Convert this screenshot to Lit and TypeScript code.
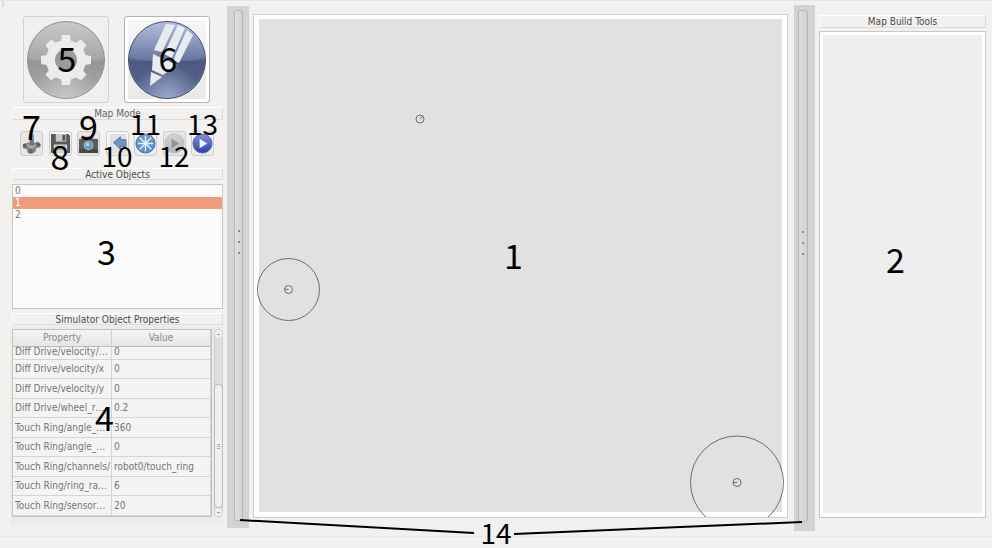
import { LitElement, html, svg, css } from "lit";
import { customElement, state } from "lit/decorators.js";
import { classMap } from "lit/directives/class-map.js";

type Row = [string, string];

const ROWS: Row[] = [
  ["Diff Drive/velocity/…", "0"],
  ["Diff Drive/velocity/x", "0"],
  ["Diff Drive/velocity/y", "0"],
  ["Diff Drive/wheel_r…", "0.2"],
  ["Touch Ring/angle_…", "360"],
  ["Touch Ring/angle_…", "0"],
  ["Touch Ring/channels/", "robot0/touch_ring"],
  ["Touch Ring/ring_ra…", "6"],
  ["Touch Ring/sensor…", "20"],
];

const gearIcon = html`<svg class="mode-icon" viewBox="0 0 80 80" aria-hidden="true">
  <defs>
    <linearGradient id="g" x1="0" y1="0" x2="0" y2="1">
      <stop offset="0" stop-color="#c9c9c9" /><stop offset="0.5" stop-color="#a6a6a6" />
      <stop offset="0.52" stop-color="#9c9c9c" /><stop offset="1" stop-color="#b4b4b4" />
    </linearGradient>
    <radialGradient id="gl" cx="0.5" cy="1" r="0.45">
      <stop offset="0" stop-color="#c8c8c8" /><stop offset="1" stop-color="#c8c8c8" stop-opacity="0" />
    </radialGradient>
  </defs>
  <circle cx="40" cy="40" r="38.5" fill="url(#g)" stroke="#8f8f8f" />
  <path d="M2 38Q40 46 78 38A38 38 0 0 1 2 38Z" fill="#8c8c8c" opacity="0.3" />
  <circle cx="40" cy="40" r="38" fill="url(#gl)" />
  <g fill="#ececec">
    ${[0, 45, 90, 135].map(
      (a) => svg`<path d="M36 15h8l1 6v38l-1 6h-8l-1-6V21z" transform=${`rotate(${a} 40 40)`} />`
    )}
    <circle cx="40" cy="40" r="20" />
  </g>
  <circle cx="40" cy="40" r="11" fill="#9a9a9a" />
</svg>`;

const pencilIcon = html`<svg class="mode-icon" viewBox="0 0 80 80" aria-hidden="true">
  <defs>
    <linearGradient id="p" x1="0" y1="0" x2="0" y2="1">
      <stop offset="0" stop-color="#b4c0de" /><stop offset="0.5" stop-color="#6877a0" />
      <stop offset="0.52" stop-color="#55618a" /><stop offset="1" stop-color="#6878a2" />
    </linearGradient>
    <radialGradient id="pl" cx="0.5" cy="1" r="0.45">
      <stop offset="0" stop-color="#9aa8cc" /><stop offset="1" stop-color="#9aa8cc" stop-opacity="0" />
    </radialGradient>
  </defs>
  <circle cx="40" cy="40" r="38.5" fill="url(#p)" stroke="#47506c" />
  <path d="M2 38Q40 46 78 38A38 38 0 0 1 2 38Z" fill="#444e70" opacity="0.4" />
  <circle cx="40" cy="40" r="38" fill="url(#pl)" />
  <g fill="#e9ecef">
    <path d="M39 4L48 5L35 32L27 30Z" />
    <path d="M51 5L58 8L45 38L37 34Z" />
    <path d="M60 10L66 15L52 43L46 40Z" />
    <path d="M26 34L50 45L36 55L25 50Z" />
    <path d="M24 52L35 57L23 66Z" />
  </g>
</svg>`;

const orb = (id: string, top: string, bottom: string, rim: string) => svg`
  <defs><linearGradient id=${id} x1="0" y1="0" x2="0" y2="1">
    <stop offset="0" stop-color=${top} /><stop offset="1" stop-color=${bottom} />
  </linearGradient></defs>
  <circle cx="11" cy="11" r="10" fill=${`url(#${id})`} stroke=${rim} />`;

const TOOLS = [
  {
    label: "Joystick",
    badge: "7",
    low: false,
    muted: true,
    art: svg`<path d="M2 12l6-2 5 1 4-2 4 3-1 3-4 1-1 4-4 2-4-1-1-4-4-1z" fill="#7f8385"/>
      <path d="M4 11l7 2 7-2-5 5h-4z" fill="#a9adaf"/>
      <circle cx="4" cy="13" r="2" fill="#5d6163"/><circle cx="18" cy="12" r="2" fill="#5d6163"/>
      <circle cx="10" cy="19" r="2" fill="#63676a"/>
      <path d="M9 4h4l1 9h-5z" fill="#6d7275"/><circle cx="11" cy="4" r="3" fill="#87a3b0"/>`,
  },
  {
    label: "Save",
    badge: "8",
    low: true,
    muted: false,
    art: svg`<path d="M1 1h18l2 2v18H1z" fill="#56585a"/>
      <path d="M6 1h11v8H6z" fill="#c6c8c9"/><path d="M13 2h3v6h-3z" fill="#4e5052"/>
      <path d="M4 12h14v9H4z" fill="#d0d1d2"/><path d="M6 14h10M6 17h10" stroke="#8b8d8e"/>`,
  },
  {
    label: "Snapshot",
    badge: "9",
    low: false,
    muted: true,
    art: svg`<path d="M7 4h8l1 2H6z" fill="#5c5e60"/><rect x="1" y="6" width="20" height="15" rx="1" fill="#5c5d5f"/>
      <path d="M1 17h20v4H1z" fill="#454648"/><circle cx="11" cy="13" r="5" fill="#b9c2c7"/>
      <circle cx="11" cy="13" r="4" fill="#5f9cb9"/><circle cx="10" cy="12" r="2" fill="#a5d4e6"/>`,
  },
  {
    label: "Back",
    badge: "10",
    low: true,
    muted: false,
    art: svg`<path d="M3 1h17v20H3z" fill="#e0e1e2"/>
      <path d="M7 10l7-6v3h6v7h-6v3z" fill="#7293be" stroke="#5674a0"/>`,
  },
  {
    label: "Center",
    badge: "11",
    low: false,
    muted: false,
    art: svg`${orb("o1", "#7a95c4", "#4a93d0", "#4a6fa8")}
      <path d="M11 3v16M3 11h16M5 5l12 12M17 5L5 17" stroke="#e4f1fb" stroke-width="1.5"/>`,
  },
  {
    label: "Step",
    badge: "12",
    low: true,
    muted: true,
    art: svg`${orb("o2", "#cfd3d3", "#b4baba", "#b8bcbc")}<path d="M8 6l8 5-8 5z" fill="#8f9595"/>`,
  },
  {
    label: "Play",
    badge: "13",
    low: false,
    muted: false,
    art: svg`${orb("o3", "#8492da", "#2a3fae", "#5560a8")}<path d="M8 6l8 5-8 5z" fill="#f4f6fd"/>`,
  },
];

/** A robot is a small body with a heading tick. */
const robot = (x: number, y: number, dx: number, dy: number) => svg`
  <circle cx=${x} cy=${y} r="4" /><path d=${`M${x} ${y}l${dx} ${dy}`} />`;

@customElement("app-root")
export class AppRoot extends LitElement {
  @state() private selected = 1;

  static styles = css`
    :host {
      display: block;
      position: relative;
      box-sizing: border-box;
      min-height: 100vh;
      overflow: hidden;
      background: #f2f1ef;
      border-top: 1px solid #e6e5e3;
      color: #5a5a5a;
      font: 10px/12px "DejaVu Sans Condensed", "DejaVu Sans", sans-serif;
    }
    * { box-sizing: border-box; }
    button { font: inherit; color: inherit; padding: 0; margin: 0; }
    .shell {
      display: grid;
      grid-template-columns: 227px 22px minmax(0, 1fr) 21px 177px;
      height: calc(100vh - 12px);
      min-height: 536px;
      border-bottom: 1px solid #e8e7e5;
    }
    .left {
      display: flex;
      flex-direction: column;
      padding: 15px 4px 11px 10px;
      position: relative;
    }
    .grip {
      position: absolute;
      left: 2px;
      top: 1px;
      width: 2px;
      height: 6px;
      background: repeating-linear-gradient(#cbcac8 0 1px, transparent 1px 2px);
    }
    .modes { display: flex; gap: 15px; padding-left: 13px; }
    .mode {
      position: relative;
      width: 86px;
      height: 87px;
      border: 1px solid #d2d1cf;
      border-radius: 3px;
      background: #f0f0ef;
      display: grid;
      place-items: center;
    }
    .mode.on { border-color: #b5b4b2; background: linear-gradient(#f6f6f6, #e9e9e9); box-shadow: inset 0 0 0 3px #fff; }
    .mode-icon { width: 80px; height: 80px; display: block; }
    .title {
      height: 12px;
      margin: 0 0 0 2px;
      width: 211px;
      border: 1px solid #dcdbd9;
      border-top-color: #fff;
      border-left-color: #fbfbfb;
      font: inherit;
      line-height: 11px;
      text-align: center;
      color: #4c4c4c;
      flex: none;
    }
    .title.map { margin-top: 4px; height: 13px; line-height: 12px; color: #666; }
    .tools { display: flex; justify-content: space-between; width: 204px; padding: 11px 0 12px 10px; }
    .tool {
      position: relative;
      width: 23px;
      height: 25px;
      border: 1px solid #cfcecc;
      border-radius: 3px;
      background: linear-gradient(#fafafa, #ebebea);
      display: grid;
      place-items: center;
    }
    .tool.muted { background: #e8e7e6; }
    .tool-icon { width: 21px; height: 21px; display: block; }
    .list {
      position: relative;
      margin: 4px 0 4px 2px;
      width: 211px;
      height: 125px;
      border: 1px solid #c6c5c3;
      background: #fbfbfb;
      flex: none;
    }
    .item {
      display: block;
      width: 100%;
      height: 12px;
      line-height: 12px;
      padding: 0 2px;
      border: 0;
      background: none;
      text-align: left;
      color: #777;
    }
    .item.on { background: #ef9c7c; color: #fff; }
    .props {
      position: relative;
      display: flex;
      gap: 2px;
      padding: 3px 0 8px 2px;
      margin-top: 1px;
      width: 213px;
      background: #ebebe9;
    }
    .view { width: 200px; height: 188px; border: 1px solid #c4c3c1; background: #f4f4f4; overflow: hidden; }
    table { width: 100%; border-collapse: separate; border-spacing: 0; table-layout: fixed; }
    th {
      height: 17px;
      padding: 0;
      border-bottom: 1px solid #bbb;
      border-right: 1px solid #d0d0d0;
      background: linear-gradient(#f4f4f4, #e6e6e5);
      font-weight: 400;
      color: #8a8a8a;
    }
    td {
      height: 20px;
      padding: 0 0 0 2px;
      border-bottom: 1px solid #d4d4d4;
      border-right: 1px solid #d4d4d4;
      color: #747474;
      white-space: nowrap;
    }
    tr:nth-child(even) td { height: 19px; }
    tr.cut td { height: 13px; line-height: 9px; vertical-align: top; }
    .scroll {
      width: 9px;
      height: 188px;
      border: 1px solid #cfcecc;
      border-radius: 4px;
      background: #dededd;
      display: flex;
      flex-direction: column;
    }
    .arrow { height: 8px; background: #f0f0ef; border-radius: 4px; display: grid; place-items: center; }
    .arrow::after { content: ""; width: 3px; height: 1px; background: #999; }
    .thumb {
      flex: 1;
      margin: 46px -1px 0;
      border: 1px solid #bbb;
      border-radius: 4px;
      background: #f0f0ef;
      display: grid;
      place-items: center;
    }
    .thumb::after {
      content: "";
      width: 3px;
      height: 5px;
      background: repeating-linear-gradient(#aaa 0 1px, transparent 1px 2px);
    }
    .splitter { background: #d3d3d3; margin: 5px 0 8px; padding: 4px 6px 7px 7px; display: flex; }
    .splitter.outer { margin: 4px 0 5px; padding: 5px 7px 9px 4px; }
    .rail {
      flex: 1;
      display: flex;
      flex-direction: column;
      align-items: center;
      justify-content: center;
      gap: 9px;
      padding-bottom: 47px;
      border: 1px solid #b4b4b4;
      border-radius: 3px;
      background: linear-gradient(90deg, #e0e0df, #d2d2d1);
    }
    .dot { width: 2px; height: 2px; background: #8c8783; }
    .stage { padding: 13px 6px 18px 4px; min-height: 0; }
    .frame {
      position: relative;
      height: 100%;
      border: 1px solid #d0cfcd;
      background: #fff;
    }
    .world { position: absolute; inset: 4px 5px 5px; background: #e1e1e1; }
    .scene { position: absolute; inset: 0; width: 100%; height: 100%; display: block; }
    .right { display: flex; flex-direction: column; gap: 3px; padding: 14px 6px 18px 4px; }
    .right .title { width: auto; margin: 0; height: 13px; line-height: 12px; }
    .right .frame { flex: 1; height: auto; border-color: #c8c7c5; }
    .right .world { inset: 3px 3px 4px; background: #eee; }

    /* Numbered call-outs lie over the parts they name. */
    .badge {
      position: absolute;
      inset: 0;
      display: grid;
      place-items: center;
      pointer-events: none;
      color: #000;
      font: 34px/34px "Noto Sans CJK JP", sans-serif;
      padding: 0 0 4px 2px;
      z-index: 2;
    }
    .badge.stage-no { padding: 0 14px 22px 0; }
    .badge.panel-no { padding: 0 14px 32px 0; }
    .badge.list-no { padding: 8px 22px 0 0; }
    .badge.props-no { padding: 0 24px 18px 0; }
    .badge.high { inset: -23px -10px auto; height: 28px; padding: 0; }
    .badge.low { inset: auto -10px -12px; height: 28px; padding: 0; }
    .badge.two { font-size: 28px; line-height: 28px; }
    .badge.low.two { bottom: -14px; }
    .note { position: absolute; left: 240px; right: 190px; top: 517px; height: 30px; pointer-events: none; }
    .legs { width: 100%; height: 17px; display: block; }
    .badge.rails-no { inset: 0 auto auto 240px; width: 32px; height: 28px; padding: 0; }
  `;

  render() {
    return html`<div class="shell">
        <section class="left">
          <span class="grip"></span>
          <div class="modes">
            <button class="mode" aria-label="Simulation mode">${gearIcon}<span class="badge">5</span></button>
            <button class="mode on" aria-label="Map mode">${pencilIcon}<span class="badge">6</span></button>
          </div>
          <h2 class="title map">Map Mode</h2>
          <div class="tools">
            ${TOOLS.map(
              (t) => html`<button class=${classMap({ tool: true, muted: t.muted })} aria-label=${t.label}>
                <svg class="tool-icon" viewBox="0 0 22 22" aria-hidden="true">${t.art}</svg>
                <span class=${classMap({ badge: true, low: t.low, high: !t.low, two: t.badge.length > 1 })}>${t.badge}</span>
              </button>`
            )}
          </div>
          <h2 class="title">Active Objects</h2>
          <div class="list">
            ${[0, 1, 2].map(
              (i) => html`<button class=${classMap({ item: true, on: this.selected === i })}
                @click=${() => (this.selected = i)}>${i}</button>`
            )}
            <span class="badge list-no">3</span>
          </div>
          <h2 class="title">Simulator Object Properties</h2>
          <div class="props">
            <div class="view">
              <table>
                <thead><tr><th>Property</th><th>Value</th></tr></thead>
                <tbody>
                  ${ROWS.map(([k, v], i) => html`<tr class=${classMap({ cut: i === 0 })}><td>${k}</td><td>${v}</td></tr>`)}
                </tbody>
              </table>
            </div>
            <div class="scroll"><span class="arrow"></span><span class="thumb"></span><span class="arrow"></span></div>
            <span class="badge props-no">4</span>
          </div>
        </section>
        <div class="splitter">
          <div class="rail"><i class="dot"></i><i class="dot"></i><i class="dot"></i></div>
        </div>
        <main class="stage">
          <div class="frame">
            <div class="world"></div>
            <svg class="scene" viewBox="0 0 533 502" role="img" aria-label="Simulated world"
              fill="none" stroke="#6c6c6c" stroke-width="1">
              ${robot(166, 104, 3, -3)}
              ${robot(34.5, 274.5, -4, -0.5)}<circle cx="34.5" cy="274.5" r="31" />
              ${robot(483, 467.5, -4, 0)}<circle cx="483" cy="467.5" r="46.5" />
            </svg>
            <span class="badge stage-no">1</span>
          </div>
        </main>
        <div class="splitter outer">
          <div class="rail"><i class="dot"></i><i class="dot"></i><i class="dot"></i></div>
        </div>
        <aside class="right">
          <h2 class="title">Map Build Tools</h2>
          <div class="frame"><div class="world"></div><span class="badge panel-no">2</span></div>
        </aside>
      </div>
      <div class="note">
        <svg class="legs" viewBox="0 0 562 17" preserveAspectRatio="none" stroke="#000" stroke-width="2" aria-hidden="true">
          <path d="M0 2L234 15M274 16L562 4" />
        </svg>
        <span class="badge two rails-no">14</span>
      </div>`;
  }
}
